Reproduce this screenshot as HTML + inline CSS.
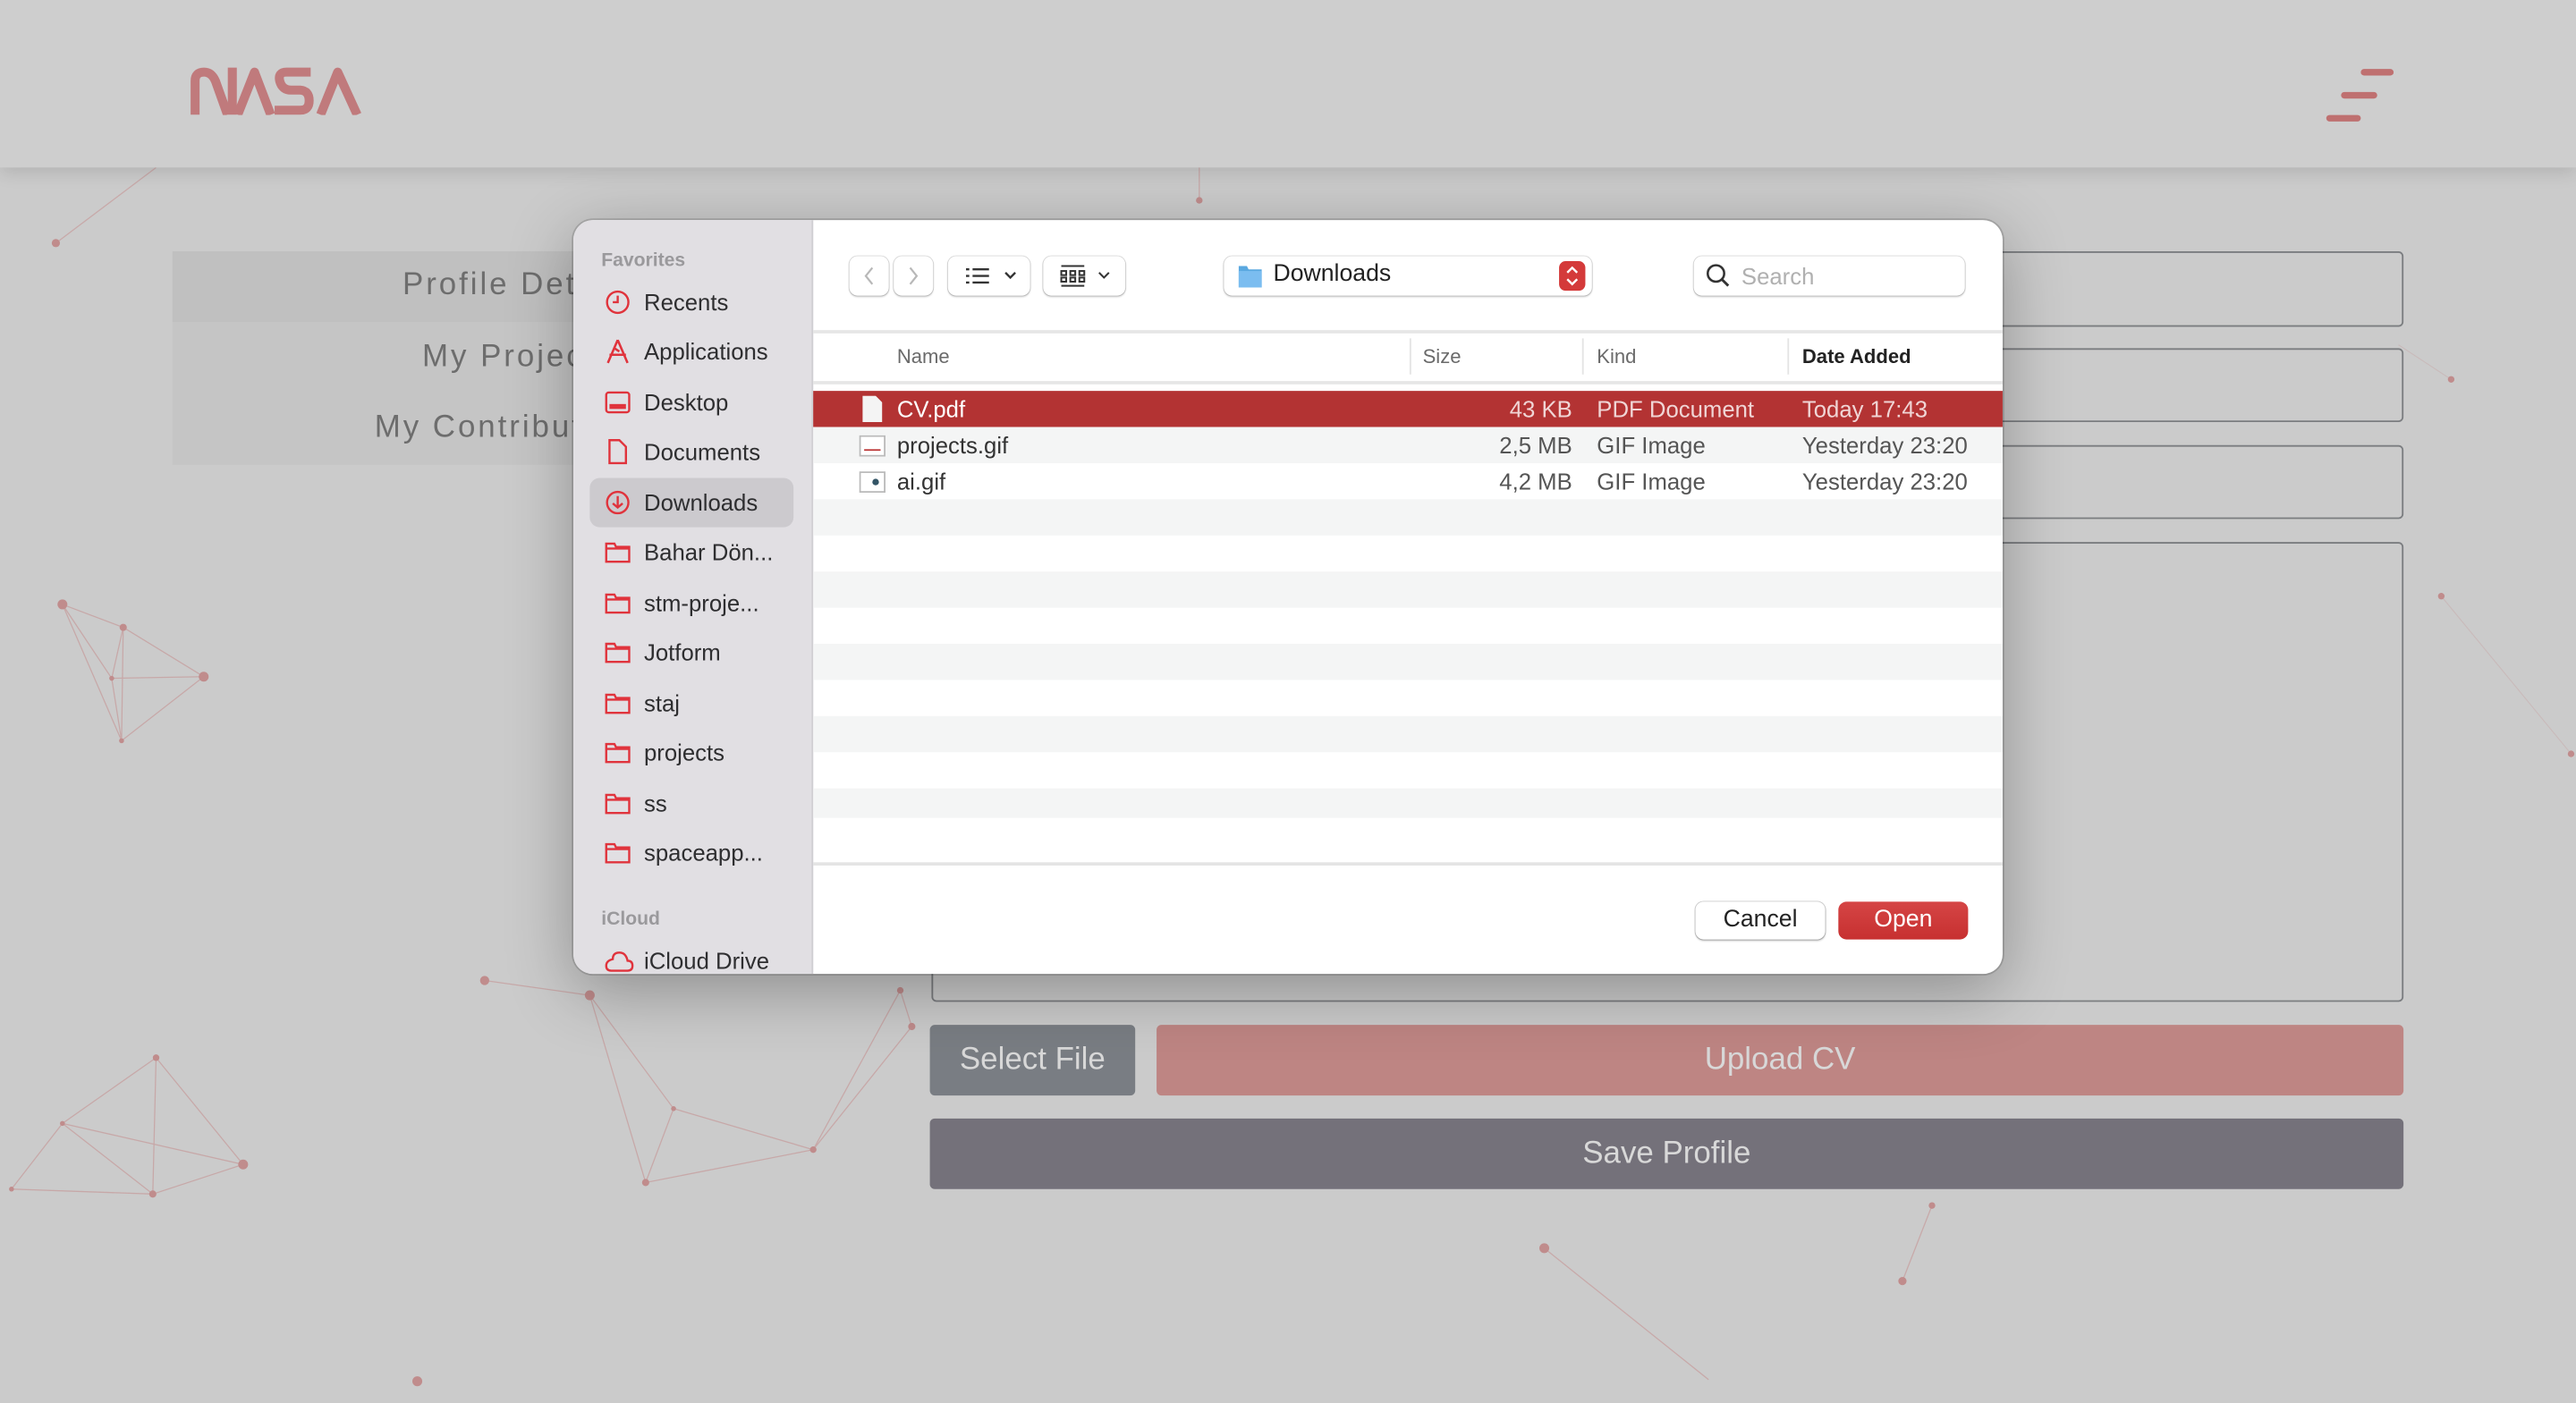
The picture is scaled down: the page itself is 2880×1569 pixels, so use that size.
<!DOCTYPE html>
<html><head><meta charset="utf-8"><style>
*{box-sizing:border-box;margin:0;padding:0}
html,body{width:2880px;height:1568px;overflow:hidden;background:#cbcbcb}
#w{position:absolute;left:0;top:0;width:1568px;height:854px;transform:scale(1.83673);transform-origin:0 0;font-family:"Liberation Sans",sans-serif;background:#cbcbcb}
.abs{position:absolute}
.hdr{left:0;top:0;width:1568px;height:102px;background:#cecece;box-shadow:0 3px 10px rgba(0,0,0,.12)}
.tabs{left:105px;top:153px;width:245px;height:130px;background:#c5c5c5}
.tab{position:absolute;font-size:19px;color:#6d6d6d;letter-spacing:1.6px;white-space:nowrap}
.inp{border:1.5px solid #7b7d80;border-radius:3px}
.btn{border-radius:3px;color:#d8d8d8;font-size:19px;display:flex;align-items:center;justify-content:center}
.dlg{left:349px;top:134px;width:870px;height:459px;border-radius:12px;overflow:hidden;background:#fff;box-shadow:0 10px 40px rgba(0,0,0,.3),0 0 0 1px rgba(0,0,0,.15)}
.side{left:0;top:0;width:146px;height:459px;background:#e1dfe3;border-right:1px solid #d0cfd3}
.si{position:absolute;left:10px;width:124px;height:30px;font-size:14px;color:#2e2e30;display:flex;align-items:center;padding-left:33px}
.si svg{position:absolute;left:9px;top:7px}
.sh{position:absolute;left:17px;font-size:11.5px;color:#9a999c;font-weight:bold}
.tb{position:absolute;top:22px;height:24px;border-radius:5px;background:#fff;box-shadow:0 0 0 .5px rgba(0,0,0,.15),0 1px 1px rgba(0,0,0,.15)}
.row{position:absolute;left:146px;width:724px;height:22px;font-size:14px;color:#333}
.row span{position:absolute;top:3px;white-space:nowrap}
.colh{position:absolute;top:9px;font-size:12px;color:#6a6a6a}
</style></head><body><div id="w">
<svg class="abs" style="left:0;top:0" width="1568" height="854">
<g stroke="#c69a9a" stroke-width=".7" fill="none" opacity=".7">
<path d="M38,368L75,382L124,412L74,451L38,368L68,413L124,412M75,382L68,413L74,451M75,382L74,451"/>
<path d="M95,644L38,684L7,724L93,727L148,709L95,644L93,727M38,684L148,709M38,684L93,727"/>
<path d="M295,597L359,606L410,675L393,720L495,700L555,625L548,603L495,700M410,675L495,700M359,606L393,720"/>
<path d="M940,760L1040,840M1158,780L1176,734M34,148L95,102M730,102L730,122"/>
</g>
<g stroke="#c69a9a" stroke-width=".6" fill="none" opacity=".35"><path d="M1486,363L1565,459M1492,231L1460,210"/></g>
<g fill="#c08c8c"><circle cx="38" cy="368" r="3"/><circle cx="75" cy="382" r="2.2"/><circle cx="124" cy="412" r="3"/><circle cx="68" cy="413" r="1.5"/><circle cx="74" cy="451" r="1.5"/><circle cx="95" cy="644" r="2"/><circle cx="38" cy="684" r="1.5"/><circle cx="148" cy="709" r="3"/><circle cx="93" cy="727" r="2.2"/><circle cx="7" cy="724" r="1.5"/><circle cx="295" cy="597" r="2.8"/><circle cx="359" cy="606" r="3"/><circle cx="410" cy="675" r="1.5"/><circle cx="393" cy="720" r="2.2"/><circle cx="495" cy="700" r="2"/><circle cx="548" cy="603" r="2"/><circle cx="555" cy="625" r="2.2"/><circle cx="940" cy="760" r="3"/><circle cx="1158" cy="780" r="2.5"/><circle cx="1176" cy="734" r="2"/><circle cx="254" cy="841" r="3"/><circle cx="730" cy="122" r="2"/><circle cx="34" cy="148" r="2.5"/><circle cx="1486" cy="363" r="2"/><circle cx="1492" cy="231" r="2"/><circle cx="1565" cy="459" r="2"/></g>
</svg>
<div class="abs hdr">
<svg class="abs" style="left:116px;top:41px" width="106" height="29" viewBox="105 105 580 157"><g stroke="#c07a7c" stroke-width="30" fill="none" stroke-linecap="butt" stroke-linejoin="round">
<path d="M120,262V150Q120,120 150,120Q175,120 188,150L228,262"/><path d="M244,262V105"/>
<path d="M262,262L318,120L372,262"/>
<path d="M505,120H425Q395,120 402,150Q410,180 440,180H470Q500,182 500,215Q500,247 470,247H385"/>
<path d="M538,262L595,120L660,262"/></g></svg>
<div class="abs" style="left:1437px;top:42px;width:20px;height:4px;border-radius:2px;background:#bf7070"></div>
<div class="abs" style="left:1425px;top:56px;width:22px;height:4px;border-radius:2px;background:#bf7070"></div>
<div class="abs" style="left:1416px;top:70px;width:21px;height:4px;border-radius:2px;background:#bf7070"></div>
</div>
<div class="abs tabs"><div class="abs" style="left:0;top:0;width:245px;height:43px;background:#c0c0c0"></div>
<div class="tab" style="top:10px;left:140px">Profile Details</div><div class="tab" style="top:54px;left:152px">My Projects</div><div class="tab" style="top:97px;left:123px">My Contributions</div></div>
<div class="abs inp" style="left:1200px;top:153px;width:263px;height:46px"></div>
<div class="abs inp" style="left:1200px;top:212px;width:263px;height:45px"></div>
<div class="abs inp" style="left:1200px;top:271px;width:263px;height:45px"></div>
<div class="abs inp" style="left:567px;top:330px;width:896px;height:280px"></div>
<div class="abs btn" style="left:566px;top:624px;width:125px;height:43px;background:#797d83">Select File</div>
<div class="abs btn" style="left:704px;top:624px;width:759px;height:43px;background:#be8583">Upload CV</div>
<div class="abs btn" style="left:566px;top:681px;width:897px;height:43px;background:#74717a">Save Profile</div>

<div class="abs dlg">
<div class="abs side">
<div class="sh" style="top:19px">Favorites</div>
<div class="si" style="top:35px"><svg width="16" height="16"><circle cx="8" cy="8" r="6.5" fill="none" stroke="#e0333c" stroke-width="1.3"/><path d="M8,4V8H5" stroke="#e0333c" stroke-width="1.3" fill="none"/></svg>Recents</div>
<div class="si" style="top:65px"><svg width="16" height="16"><path d="M8,1L2,15M8,1L14,15M3,10H13M6,6l3,2" stroke="#e0333c" stroke-width="1.4" fill="none"/></svg>Applications</div>
<div class="si" style="top:96px"><svg width="16" height="16"><rect x="1" y="2" width="14" height="12" rx="1.5" fill="none" stroke="#e0333c" stroke-width="1.3"/><rect x="3" y="9" width="10" height="3" fill="#e0333c"/></svg>Desktop</div>
<div class="si" style="top:126px"><svg width="16" height="16"><path d="M3,1H9L13,5V15H3Z" fill="none" stroke="#e0333c" stroke-width="1.3"/></svg>Documents</div>
<div class="si" style="top:157px;background:#cccace;border-radius:6px"><svg width="16" height="16"><circle cx="8" cy="8" r="6.5" fill="none" stroke="#e0333c" stroke-width="1.3"/><path d="M8,4V11M5,8.5L8,11L11,8.5" stroke="#e0333c" stroke-width="1.3" fill="none"/></svg>Downloads</div>
<div class="si" style="top:187px"><svg width="16" height="16"><path d="M1,3H6L7,5H15V14H1ZM1,6H15" fill="none" stroke="#e0333c" stroke-width="1.3"/></svg>Bahar Dön...</div>
<div class="si" style="top:218px"><svg width="16" height="16"><path d="M1,3H6L7,5H15V14H1ZM1,6H15" fill="none" stroke="#e0333c" stroke-width="1.3"/></svg>stm-proje...</div>
<div class="si" style="top:248px"><svg width="16" height="16"><path d="M1,3H6L7,5H15V14H1ZM1,6H15" fill="none" stroke="#e0333c" stroke-width="1.3"/></svg>Jotform</div>
<div class="si" style="top:279px"><svg width="16" height="16"><path d="M1,3H6L7,5H15V14H1ZM1,6H15" fill="none" stroke="#e0333c" stroke-width="1.3"/></svg>staj</div>
<div class="si" style="top:309px"><svg width="16" height="16"><path d="M1,3H6L7,5H15V14H1ZM1,6H15" fill="none" stroke="#e0333c" stroke-width="1.3"/></svg>projects</div>
<div class="si" style="top:340px"><svg width="16" height="16"><path d="M1,3H6L7,5H15V14H1ZM1,6H15" fill="none" stroke="#e0333c" stroke-width="1.3"/></svg>ss</div>
<div class="si" style="top:370px"><svg width="16" height="16"><path d="M1,3H6L7,5H15V14H1ZM1,6H15" fill="none" stroke="#e0333c" stroke-width="1.3"/></svg>spaceapp...</div>
<div class="sh" style="top:420px">iCloud</div>
<div class="si" style="top:436px"><svg width="18" height="16"><path d="M4,14H14Q17,14 17,11Q17,8 14,8Q13,3 9,3Q5,3 5,7Q1,8 1,11Q1,14 4,14Z" fill="none" stroke="#e0333c" stroke-width="1.3"/></svg>iCloud Drive</div>
</div>
<div class="tb" style="left:168px;width:24px"><svg width="24" height="24"><path d="M14,7L10,12L14,17" stroke="#b8b8b8" stroke-width="1.2" fill="none"/></svg></div>
<div class="tb" style="left:195px;width:24px"><svg width="24" height="24"><path d="M10,7L14,12L10,17" stroke="#b8b8b8" stroke-width="1.2" fill="none"/></svg></div>
<div class="tb" style="left:228px;width:50px"><svg width="50" height="24"><g stroke="#333" stroke-width="1.3"><path d="M11,8H13M11,12H13M11,16H13M15,8H25M15,12H25M15,16H25"/><path d="M35,10L38,13L41,10" fill="none"/></g></svg></div>
<div class="tb" style="left:286px;width:50px"><svg width="50" height="24"><g stroke="#333" stroke-width="1.1" fill="none"><path d="M11,6H25M11,18H25"/><rect x="11" y="9" width="3" height="2.5"/><rect x="16.5" y="9" width="3" height="2.5"/><rect x="22" y="9" width="3" height="2.5"/><rect x="11" y="13" width="3" height="2.5"/><rect x="16.5" y="13" width="3" height="2.5"/><rect x="22" y="13" width="3" height="2.5"/><path d="M34,10L37,13L40,10"/></g></svg></div>
<div class="tb" style="left:396px;width:224px"><svg class="abs" style="left:8px;top:4px" width="16" height="16"><path d="M1,2H6L7,4H15V15H1Z" fill="#5aa8e0"/><rect x="1" y="5" width="14" height="10" fill="#7bbdf0"/></svg><span class="abs" style="left:30px;top:3px;font-size:14.5px;color:#222">Downloads</span><div class="abs" style="right:4px;top:3px;width:16px;height:18px;border-radius:4px;background:#d43a3a"><svg width="16" height="18"><path d="M5,7L8,4L11,7M5,11L8,14L11,11" stroke="#fff" stroke-width="1.3" fill="none"/></svg></div></div>
<div class="tb" style="left:682px;width:165px"><svg class="abs" style="left:7px;top:4px" width="16" height="16"><circle cx="6.5" cy="6.5" r="5" stroke="#333" stroke-width="1.4" fill="none"/><path d="M10,10L14,14" stroke="#333" stroke-width="1.6"/></svg><span class="abs" style="left:29px;top:4px;font-size:14px;color:#b0b0b0">Search</span></div>
<div class="abs" style="left:146px;top:67px;width:724px;height:2px;background:#e6e6e6"></div>
<div class="colh" style="left:197px;top:76px">Name</div>
<div class="abs" style="left:509px;top:72px;width:1px;height:22px;background:#e4e4e4"></div>
<div class="colh" style="left:517px;top:76px">Size</div>
<div class="abs" style="left:614px;top:72px;width:1px;height:22px;background:#e4e4e4"></div>
<div class="colh" style="left:623px;top:76px">Kind</div>
<div class="abs" style="left:739px;top:72px;width:1px;height:22px;background:#e4e4e4"></div>
<div class="colh" style="left:748px;top:76px;color:#222;font-weight:bold">Date Added</div>
<div class="abs" style="left:146px;top:98px;width:724px;height:2px;background:#e6e6e6"></div>
<div class="row" style="top:104px;background:#b33333;color:#fff"><svg class="abs" style="left:30px;top:3px" width="12" height="16"><path d="M0,0H8L12,4V16H0Z" fill="#f4f4f4"/></svg><span style="left:51px">CV.pdf</span><span style="right:262px;color:#f0d5d5">43 KB</span><span style="left:477px;color:#f0d5d5">PDF Document</span><span style="left:602px;color:#f0d5d5">Today 17:43</span></div>
<div class="row" style="top:126px;background:#f4f5f5"><svg class="abs" style="left:28px;top:5px" width="16" height="13"><rect x=".5" y=".5" width="15" height="12" fill="#fff" stroke="#bbb"/><path d="M3,9H13" stroke="#b33" /></svg><span style="left:51px">projects.gif</span><span style="right:262px;color:#555">2,5 MB</span><span style="left:477px;color:#555">GIF Image</span><span style="left:602px;color:#555">Yesterday 23:20</span></div>
<div class="row" style="top:148px"><svg class="abs" style="left:28px;top:5px" width="16" height="13"><rect x=".5" y=".5" width="15" height="12" fill="#fff" stroke="#bbb"/><circle cx="10" cy="6.5" r="2" fill="#356"/></svg><span style="left:51px">ai.gif</span><span style="right:262px;color:#555">4,2 MB</span><span style="left:477px;color:#555">GIF Image</span><span style="left:602px;color:#555">Yesterday 23:20</span></div>
<div class="row" style="top:170px;background:#f4f5f5"></div>
<div class="row" style="top:214px;background:#f4f5f5"></div>
<div class="row" style="top:258px;background:#f4f5f5"></div>
<div class="row" style="top:302px;background:#f4f5f5"></div>
<div class="row" style="top:346px;background:#f4f5f5;height:18px"></div>
<div class="abs" style="left:146px;top:391px;width:724px;height:2px;background:#e4e4e4"></div>
<div class="abs" style="left:683px;top:415px;width:79px;height:23px;border-radius:5px;background:#fff;box-shadow:0 0 0 .5px rgba(0,0,0,.2),0 1px 1px rgba(0,0,0,.2);font-size:14.5px;color:#222;text-align:center;line-height:23px">Cancel</div>
<div class="abs" style="left:770px;top:415px;width:79px;height:23px;border-radius:5px;background:linear-gradient(#d54545,#c73030);font-size:14.5px;color:#fff;text-align:center;line-height:23px">Open</div>
</div>
</div></body></html>
